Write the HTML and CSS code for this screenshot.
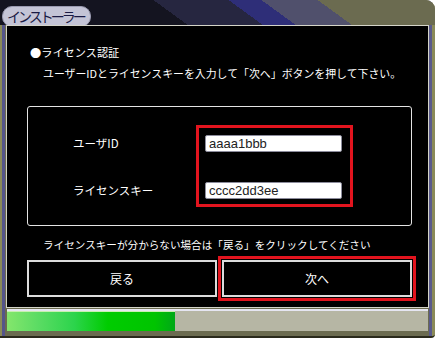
FILE: index.html
```html
<!DOCTYPE html>
<html lang="ja">
<head>
    <meta charset="UTF-8">
    <title>インストーラー</title>
    <link rel="stylesheet" href="styles.css">
</head>
<body>
    <div class="window">
        <div class="titlebar">
            <span class="title">インストーラー</span>
        </div>
        <div class="content">
            <p class="heading">●ライセンス認証</p>
            <p class="note">ユーザーIDとライセンスキーを入力して「次へ」ボタンを押して下さい。</p>
            <div class="form-box">
                <div class="labels">
                    <span>ユーザID</span>
                    <span>ライセンスキー</span>
                </div>
                <div class="fields">
                    <input type="text" value="aaaa1bbb">
                    <input type="text" value="cccc2dd3ee">
                </div>
            </div>
            <p class="note help">ライセンスキーが分からない場合は「戻る」をクリックしてください</p>
            <div class="buttons">
                <button class="btn back">戻る</button>
                <div class="highlight">
                    <button class="btn">次へ</button>
                </div>
            </div>
        </div>
        <div class="progress">
            <div class="progress-fill" style="width: 40%;"></div>
        </div>
    </div>
</body>
</html>
```

FILE: styles.css
```css
:root {
    --olive: #6b6b50;
    --navy: #1c1c34;
    --red: #e2141e;
    --white: #ffffff;
    --frame-line: #d4d4c8;
}
* {
    margin: 0;
    padding: 0;
    box-sizing: border-box;
}

body {
    background-color: var(--white);
    font-family: "Noto Sans CJK JP", "Noto Sans", sans-serif;
    color: var(--white);
}

.window {
    width: 435px;
    height: 338px;
    display: flex;
    flex-direction: column;
    background:
        linear-gradient(90deg, #8a8a58 0 2px, #55558a 2px 5px, var(--olive) 5px calc(100% - 6px), #5a5a8a calc(100% - 6px) calc(100% - 3px), #8a8a58 calc(100% - 3px));
    border-bottom: 2px solid #2a2a1c;
    border-radius: 0 9px 4px 0;
    overflow: hidden;
}

.titlebar {
    height: 25px;
    padding: 3px 0 0 2px;
    background: linear-gradient(36deg, #141420 0 40%, #262640 40% 56%, #2e2e78 56% 63%, #50506c 63% 75%, var(--olive) 75%);
}
.title {
    display: inline-block;
    height: 21px;
    padding: 0 6px 0 4px;
    border-radius: 10px;
    background-color: #c4c4d6;
    border: 1px solid #9a9ab0;
    color: #1a1a44;
    font-size: 14px;
    line-height: 19px;
    letter-spacing: -3px;
}

.content {
    height: 283px;
    margin: 0 6px;
    padding: 18px 0 6px 20px;
    background-color: #000000;
    border: 1px solid var(--frame-line);
}

.heading {
    font-size: 11.2px;
    line-height: 16px;
    padding-left: 3px;
}

.note {
    font-size: 10.9px;
    line-height: 16px;
    margin-top: 5px;
    padding-left: 16px;
}

.form-box {
    width: 385px;
    height: 120px;
    margin-top: 25px;
    padding-left: 45px;
    display: flex;
    align-items: center;
    border: 1px solid #e4e4e4;
    border-radius: 3px;
}

.labels {
    width: 123px;
    padding: 10px 0 8px;
    display: flex;
    flex-direction: column;
    gap: 30px;
    font-size: 11.5px;
}
.labels span {
    height: 17px;
    line-height: 17px;
}

.fields {
    width: 157px;
    padding: 7px 8px 5px 6px;
    display: flex;
    flex-direction: column;
    gap: 30px;
    border: 3px solid var(--red);
}
.fields input {
    width: 137px;
    height: 17px;
    padding: 0 3px;
    border: 1px solid #8c8c9c;
    border-radius: 2px;
    background-color: var(--white);
    color: #222222;
    font-family: "Liberation Sans", sans-serif;
    font-size: 13px;
    outline: none;
}

.help {
    font-size: 10.6px;
    margin-top: 11px;
}

.buttons {
    display: flex;
    align-items: flex-start;
    gap: 1px;
    margin-top: 3px;
}
.btn {
    width: 190px;
    height: 37px;
    background-color: #000000;
    border: 2px solid #dcdcdc;
    color: var(--white);
    font-family: "Noto Sans CJK JP", sans-serif;
    font-size: 12px;
}
.back {
    margin-top: 4px;
}
.highlight {
    padding: 1px;
    border: 3px solid var(--red);
}

.progress {
    height: 22px;
    margin: 1px 7px 0;
    border-top: 2px solid #e6e6f2;
    background-color: #b6b6a4;
}
.progress-fill {
    height: 100%;
    background: linear-gradient(90deg, #84e66c 0%, #5cdc64 18%, #2cd44c 40%, #00cc00 60%, #00c400 88%, #00a818 100%);
    border-top: 1px solid #c8f0b0;
}
```
